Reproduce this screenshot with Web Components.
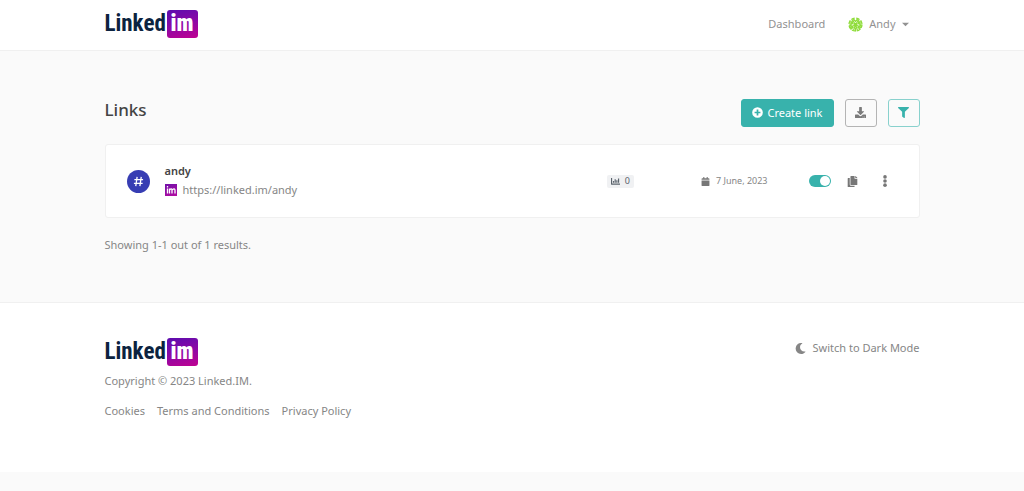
<!DOCTYPE html>
<html lang="en">
<head>
<meta charset="utf-8">
<meta name="viewport" content="width=device-width, initial-scale=1">
<title>Links - Linked.IM</title>
<style>
body{margin:0;background:#fafafa;color:#868686;font:11px/20px "Noto Sans","Open Sans",sans-serif;
--page:815px;--teal:#38b2ac;--line:#f0f0f0;--dark:#444}
</style>
</head>
<body>
<links-app></links-app>
<script>
const define=(name,css,html)=>customElements.define(name,class extends HTMLElement{
  constructor(){
    super();
    const t=document.createElement('template');
    t.innerHTML=`<style>*{box-sizing:border-box}a{color:inherit;text-decoration:none}svg{display:block;flex:none}button{font:inherit;color:inherit;cursor:pointer;margin:0}${css}</style>${html}`;
    this.attachShadow({mode:'open'}).append(t.content.cloneNode(true));
  }
});

const icons={
  plus:['0 0 512 512','<path fill-rule="evenodd" d="M256 8a248 248 0 1 0 0 496a248 248 0 1 0 0-496zM216 120h80v96h96v80h-96v96h-80v-96h-96v-80h96z"/>'],
  download:['0 0 512 512','<path fill-rule="evenodd" d="M216 0h80q24 0 24 24v168h88q27 3 11 24L267 367q-11 10-22 0L93 216q-16-21 11-24h88V24q0-24 24-24zM24 352h123l49 49q60 50 120 0l49-49h123q24 0 24 24v112q0 24-24 24H24q-24 0-24-24V376q0-24 24-24zM372 444a20 20 0 1 0 0 40a20 20 0 1 0 0-40zM440 444a20 20 0 1 0 0 40a20 20 0 1 0 0-40z"/>'],
  filter:['0 0 512 512','<path d="M488 0H24C3 0-8 26 7 41l185 185v206q0 12 10 20l80 55c16 11 38 0 38-19V226L505 41c15-15 4-41-17-41z"/>'],
  chart:['0 0 512 512','<path d="M0 60h64v310h448v66H24q-24 0-24-24zM108 226h68v102h-68zM204 132h68v196h-68zM300 180h68v148h-68zM396 84h68v244h-68z"/>'],
  calendar:['0 0 448 512','<path d="M0 464q0 48 48 48h352q48 0 48-48V192H0zM400 64h-48V12q0-12-12-12h-40q-12 0-12 12v52H160V12q0-12-12-12h-40q-12 0-12 12v52H48q-48 0-48 48v48h448v-48q0-48-48-48z"/>'],
  copy:['0 0 448 512','<path d="M320 448v40q0 24-24 24H24q-24 0-24-24V120q0-24 24-24h72v296q0 56 56 56zM320 120V0H152q-24 0-24 24v368q0 24 24 24h272q24 0 24-24V128H328q-8 0-8-8zM441 73L375 7q-7-7-17-7h-6v96h96v-6q0-10-7-17z"/>'],
  dots:['0 0 192 512','<circle cx="96" cy="80" r="78"/><circle cx="96" cy="256" r="78"/><circle cx="96" cy="432" r="78"/>'],
  moon:['0 0 512 512','<path d="M283 512c79 0 151-36 199-95 7-9-1-22-12-20C347 420 234 326 234 201c0-72 39-138 101-174 10-5 7-21-4-23A256 256 0 1 0 283 512z"/>'],
  hash:['0 0 24 24','<g fill="none" stroke="currentColor" stroke-width="2.8"><path d="M9 2L6 22M18 2l-3 20M3 8h19M2 16h19"/></g>'],
  caret:['0 0 8 8','<path d="M0 2h8L4 6z"/>']
};
customElements.define('ui-icon',class extends HTMLElement{
  constructor(){super();this.attachShadow({mode:'open'})}
  connectedCallback(){
    const [box,shape]=icons[this.getAttribute('name')];
    this.shadowRoot.innerHTML=`<style>:host{display:inline-flex;flex:none;width:11px;height:11px}svg{display:block;width:100%;height:100%}</style><svg viewBox="${box}" fill="currentColor" aria-hidden="true">${shape}</svg>`;
  }
});

define('brand-logo',`
:host{display:block}
a{display:flex;align-items:center;gap:2px;height:28px;color:#0c2340;font:bold 23px/28px "Liberation Sans Narrow","Roboto Condensed","Roboto",sans-serif}
b{width:31px;height:28px;border-radius:3px;text-align:center;color:#fff;background:linear-gradient(165deg,#5b0dae,#8c08a6 50%,#c00291)}
.name{width:60px;white-space:nowrap}`,
`<a href="#"><span class="name">Linked</span><b>im</b></a>`);

define('user-avatar',`:host{display:block;width:15px;height:15px}`,
`<svg width="15" height="15" viewBox="0 0 30 30" fill="none" stroke="#8fdc3a" stroke-width="2.5" aria-hidden="true">
<circle cx="15" cy="15" r="13" stroke-dasharray="7 3.2"/>
<path d="M15 15L8 5M15 15L22 5M15 15L2 11M15 15L28 11M15 15L4 22M15 15L26 22M15 15L11 27M15 15L19 27"/>
<path d="M10 3l5 6 5-6M3 8l8 1M27 8l-8 1M2 16l7 0M28 16l-7 0M5 25l6-5M25 25l-6-5M15 21v8M7 10l-2 8 5 4M23 10l2 8-5 4M11 7l-3 6M19 7l3 6"/></svg>`);

define('site-header',`
:host{display:block;background:#fff;border-bottom:1px solid var(--line)}
header,nav,button{display:flex;align-items:center}
header{max-width:var(--page);margin:auto;height:50px;justify-content:space-between;padding-bottom:2px}
nav{gap:23px;color:#929292}
button{border:0;background:none;padding:0 11px 0 0;gap:6px}
ui-icon{width:7px;height:7px}`,
`<header><brand-logo></brand-logo><nav><a href="#">Dashboard</a><button aria-haspopup="menu"><user-avatar></user-avatar>Andy<ui-icon name="caret"></ui-icon></button></nav></header>`);

define('ui-button',`
:host{display:block}
button{display:flex;align-items:center;justify-content:center;gap:4px;min-width:32px;height:28px;padding:0 9px;border:1px solid #b4b4b4;border-radius:3px;background:none;color:#7b7b7b}
:host([kind=primary]) button{padding:0 10px;background:var(--teal);border-color:var(--teal);color:#fff}
:host([kind=accent]) button{border-color:#88d1cd;color:var(--teal)}`,
`<button><slot></slot></button>`);

define('link-row',`
:host{display:block;background:#fff;border:1px solid var(--line);border-radius:3px;padding:17px 21px}
.row,.info,.url,.date,.badge,.actions{display:flex;align-items:center}
.row{min-height:38px}
.info{flex:1;gap:15px;min-width:0}
.hash{display:flex;align-items:center;justify-content:center;width:23px;height:23px;border-radius:50%;background:#373db3;color:#fff}
.title{display:block;color:var(--dark);font-weight:600;line-height:18px}
.url{gap:6px}
.fav{width:12px;height:12px;background:linear-gradient(160deg,#7110a9,#b40ca1)}
.badge{gap:5px;height:13px;padding:0 4px;border-radius:2px;background:#f0f1f3;color:#5b646d;font-size:9px}
.badge ui-icon{width:9px;height:9px}
.date{gap:6px;margin:0 41px 0 67px;font-size:9px}
.date ui-icon{width:9px;height:9px;color:#777}
.actions{color:#777}
input{appearance:none;width:22px;height:12px;margin:0 16px 0 0;border-radius:6px;background:var(--teal);display:flex;justify-content:flex-end;padding:1px;cursor:pointer}
input::before{content:"";width:10px;height:10px;border-radius:50%;background:#fff}
input:not(:checked){justify-content:flex-start;background:#aaa}
button{display:flex;border:0;background:none;padding:0}
.more{margin:0 7px 0 21px}
.more ui-icon{width:12px;height:12px}`,
`<div class="row"><div class="info"><span class="hash"><ui-icon name="hash"></ui-icon></span><div><a class="title" href="#"><slot name="title"></slot></a><span class="url"><svg class="fav" viewBox="0 0 24 24" fill="none" stroke="#fff" stroke-width="2.6" aria-hidden="true"><path d="M5 9v10M5 4v3M9 19V9M9 12q5-5 5 1v6M14 12q6-5 6 1v6"/></svg><a href="#"><slot name="url"></slot></a></span></div></div>
<span class="badge"><ui-icon name="chart"></ui-icon><slot name="hits"></slot></span>
<span class="date"><ui-icon name="calendar"></ui-icon><slot name="date"></slot></span>
<div class="actions"><input type="checkbox" role="switch" aria-label="Link enabled" checked><button aria-label="Copy link"><ui-icon name="copy"></ui-icon></button><button class="more" aria-label="More actions"><ui-icon name="dots"></ui-icon></button></div></div>`);

define('links-page',`
:host{display:block}
main{max-width:var(--page);margin:auto;padding:47px 0}
.head,.tools{display:flex;align-items:center}
.head{justify-content:space-between;margin-bottom:17px}
.tools{gap:11px}
h1{margin:0;padding-bottom:5px;color:var(--dark);font-size:17px;line-height:24px;font-weight:500}
p{margin:17px 0 0}`,
`<main><div class="head"><h1>Links</h1><div class="tools"><ui-button kind="primary"><ui-icon name="plus"></ui-icon>Create link</ui-button><ui-button><ui-icon name="download" role="img" aria-label="Export"></ui-icon></ui-button><ui-button kind="accent"><ui-icon name="filter" role="img" aria-label="Filter"></ui-icon></ui-button></div></div>
<link-row><span slot="title">andy</span><span slot="url">https://linked.im/andy</span><span slot="hits">0</span><span slot="date">7 June, 2023</span></link-row>
<p>Showing 1-1 out of 1 results.</p></main>`);

define('site-footer',`
:host{display:block;background:#fff;border-top:1px solid var(--line)}
footer{max-width:var(--page);margin:auto;padding:35px 0 51px;display:flex;justify-content:space-between;align-items:flex-start}
p{margin:5px 0 10px}
nav,button{display:flex;align-items:center}
nav{gap:12px}
button{gap:7px;border:0;background:none;padding:0}`,
`<footer><div><brand-logo></brand-logo><p>Copyright © 2023 Linked.IM.</p><nav><a href="#">Cookies</a><a href="#">Terms and Conditions</a><a href="#">Privacy Policy</a></nav></div><button><ui-icon name="moon"></ui-icon>Switch to Dark Mode</button></footer>`);

define('links-app',`:host{display:block}`,`<site-header></site-header><links-page></links-page><site-footer></site-footer>`);
</script>
</body>
</html>
